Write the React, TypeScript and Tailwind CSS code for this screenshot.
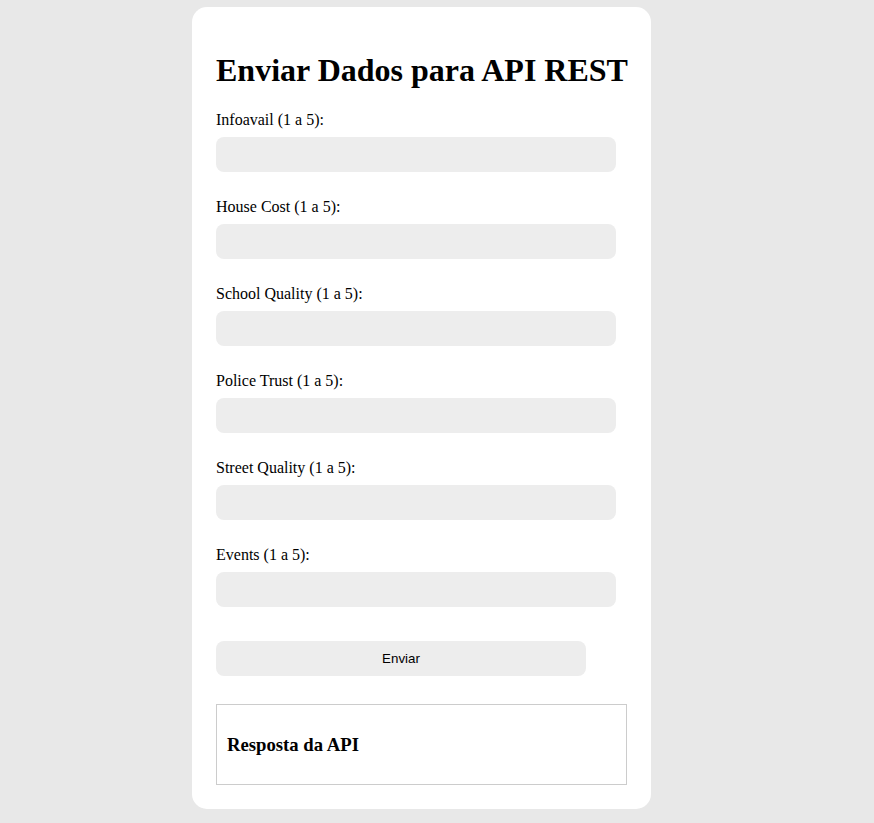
import React, { useState } from 'react';

const fields = [
  { key: 'infoavail', label: 'Infoavail (1 a 5):' },
  { key: 'housecost', label: 'House Cost (1 a 5):' },
  { key: 'schoolquality', label: 'School Quality (1 a 5):' },
  { key: 'policetrust', label: 'Police Trust (1 a 5):' },
  { key: 'streetquality', label: 'Street Quality (1 a 5):' },
  { key: 'events', label: 'Events (1 a 5):' },
];

export default function App() {
  const [values, setValues] = useState<Record<string, string>>({});

  return (
    <div
      className="min-h-screen bg-[#e8e8e8] pl-[192px] pt-[7px] pb-[15px] text-black"
      style={{ fontFamily: '"Liberation Serif", "Times New Roman", serif' }}
    >
      <div className="w-[459px] rounded-[15px] bg-white p-[24px]">
        <h1 className="mt-[21px] mb-[22px] whitespace-nowrap text-[32px] font-bold leading-[37px]">
          Enviar Dados para API REST
        </h1>

        <form onSubmit={(e) => e.preventDefault()}>
          {fields.map((f) => (
            <div key={f.key} className="mb-[26px]">
              <label htmlFor={f.key} className="mb-[8px] block text-[16px] leading-[18px]">
                {f.label}
              </label>
              <input
                id={f.key}
                type="number"
                min={1}
                max={5}
                value={values[f.key] || ''}
                onChange={(e) => setValues({ ...values, [f.key]: e.target.value })}
                className="block h-[35px] w-[400px] rounded-[8px] bg-[#ededed] px-[10px] outline-none"
              />
            </div>
          ))}

          {/* Submit */}
          <button
            type="submit"
            className="mt-[34px] block h-[35px] w-[370px] rounded-[8px] bg-[#ededed] text-[13.33px]"
            style={{ fontFamily: '"Liberation Sans", Arial, sans-serif' }}
          >
            Enviar
          </button>
        </form>

        <div className="mt-[28px] border border-[#cccccc] px-[10px] py-[10px]">
          <h3 className="my-[18.7px] text-[18.72px] font-bold leading-[21.5px]">Resposta da API</h3>
        </div>
      </div>
    </div>
  );
}
